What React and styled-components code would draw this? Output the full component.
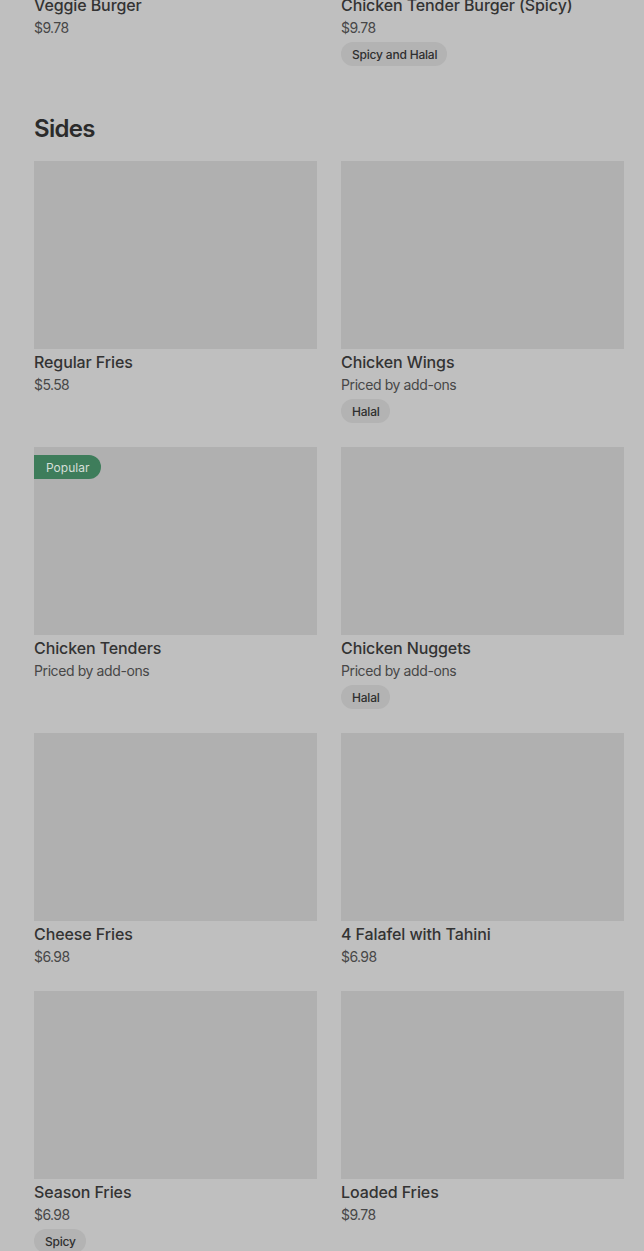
import React from 'react';
import styled, { createGlobalStyle } from 'styled-components';

const GlobalStyle = createGlobalStyle`
  html, body {
    margin: 0;
    padding: 0;
    background: #bfbfbf;
    overflow: hidden;
  }
  body {
    font-family: Inter, "Noto Sans", Arial, sans-serif;
    color: #2f2f2f;
  }
`;

// the page is scrolled: the images of the last burger row are above the fold
const Page = styled.div`
  margin-top: -196px;
  padding: 0 20px 40px 34px;
`;

const Section = styled.section`
  & + & {
    margin-top: 47px;
  }
`;

const SectionTitle = styled.h2`
  margin: 0 0 16px;
  font-size: 24px;
  line-height: 32px;
  font-weight: 600;
  letter-spacing: -0.7px;
  color: #2b2b2b;
`;

const Grid = styled.div`
  display: grid;
  grid-template-columns: 1fr 1fr;
  column-gap: 24px;
  row-gap: 24px;
`;

const Card = styled.div`
  display: flex;
  flex-direction: column;
  align-items: flex-start;
`;

const Thumb = styled.div`
  position: relative;
  width: 100%;
  height: 188px;
  background: #b0b0b0;
`;

const Badge = styled.span`
  position: absolute;
  top: 8px;
  left: 0;
  height: 24px;
  padding: 0 12px;
  display: flex;
  align-items: center;
  border-radius: 0 12px 12px 0;
  background: #3e7d5b;
  color: #d6dfd9;
  font-size: 12px;
  font-weight: 400;
`;

const Name = styled.div`
  margin-top: 2px;
  font-size: 16px;
  line-height: 22px;
  font-weight: 500;
  letter-spacing: -0.1px;
  color: #333;
`;

const Price = styled.div`
  padding-top: 2px;
  font-size: 14px;
  line-height: 20px;
  color: #474747;
  letter-spacing: ${(p) => (p.$money ? '-0.6px' : '-0.4px')};
`;

const Tag = styled.span`
  margin-top: 4px;
  height: 24px;
  padding: 0 10px 0 11px;
  display: inline-flex;
  align-items: center;
  border-radius: 12px;
  background: #b3b3b3;
  color: #2f2f2f;
  font-size: 12px;
  font-weight: 500;
  letter-spacing: -0.2px;
`;

const burgers = [
  { name: 'Veggie Burger', price: '$9.78' },
  { name: 'Chicken Tender Burger (Spicy)', price: '$9.78', tag: 'Spicy and Halal' },
];

const sides = [
  { name: 'Regular Fries', price: '$5.58' },
  { name: 'Chicken Wings', price: 'Priced by add-ons', tag: 'Halal' },
  { name: 'Chicken Tenders', price: 'Priced by add-ons', badge: 'Popular' },
  { name: 'Chicken Nuggets', price: 'Priced by add-ons', tag: 'Halal' },
  { name: 'Cheese Fries', price: '$6.98' },
  { name: '4 Falafel with Tahini', price: '$6.98' },
  { name: 'Season Fries', price: '$6.98', tag: 'Spicy' },
  { name: 'Loaded Fries', price: '$9.78' },
];

const Item = ({ item }) => (
  <Card>
    <Thumb>{item.badge && <Badge>{item.badge}</Badge>}</Thumb>
    <Name>{item.name}</Name>
    <Price $money={item.price.startsWith('$')}>{item.price}</Price>
    {item.tag && <Tag>{item.tag}</Tag>}
  </Card>
);

export default function App() {
  return (
    <>
      <GlobalStyle />
      <Page>
        <Section>
          <Grid>
            {burgers.map((item) => (
              <Item key={item.name} item={item} />
            ))}
          </Grid>
        </Section>
        <Section>
          <SectionTitle>Sides</SectionTitle>
          <Grid>
            {sides.map((item) => (
              <Item key={item.name} item={item} />
            ))}
          </Grid>
        </Section>
      </Page>
    </>
  );
}
